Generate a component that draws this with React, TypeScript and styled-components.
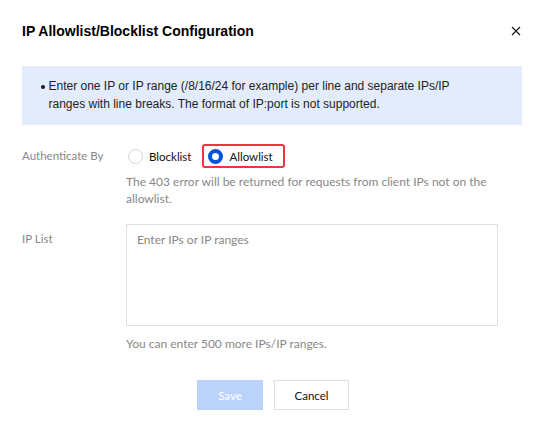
import React, { useState } from "react";
import styled, { createGlobalStyle } from "styled-components";

const GlobalStyle = createGlobalStyle`
  html, body {
    margin: 0;
    padding: 0;
    background: #ffffff;
  }
  * {
    box-sizing: border-box;
  }
`;

const Dialog = styled.div`
  width: 546px;
  height: 430px;
  background: #ffffff;
  padding: 21px 24px 0 22px;
  font-family: "Lato", "Liberation Sans", sans-serif;
  color: #000000;
`;

const Header = styled.div`
  display: flex;
  align-items: center;
  justify-content: space-between;
  height: 20px;
`;

const Title = styled.div`
  font-family: "Liberation Sans", Arial, sans-serif;
  font-size: 14px;
  font-weight: bold;
  color: #000000;
`;

const CloseButton = styled.button`
  background: none;
  border: none;
  padding: 0;
  width: 12px;
  height: 12px;
  display: flex;
  align-items: center;
  justify-content: center;
  cursor: pointer;
  color: #222;
`;

const Notice = styled.div`
  margin-top: 25px;
  background: #e3ecfd;
  padding: 11px 54px 12px 19px;
  font-family: "Liberation Sans", Arial, sans-serif;
  font-size: 12px;
  line-height: 18px;
  color: #222;
`;

const NoticeItem = styled.div`
  display: flex;
  gap: 4px;
`;

const Bullet = styled.span`
  flex-shrink: 0;
  width: 3.5px;
  height: 3.5px;
  border-radius: 50%;
  background: #222;
  margin-top: 8px;
`;

const Form = styled.div`
  margin-top: 19px;
  display: flex;
  flex-direction: column;
  gap: 17px;
`;

const FormRow = styled.div`
  display: grid;
  grid-template-columns: 104px 372px;
`;

const Label = styled.div<{ $offset?: number }>`
  font-size: 11.5px;
  color: #888888;
  line-height: 24px;
  padding-top: ${(p) => p.$offset ?? 0}px;
`;

const Field = styled.div`
  display: flex;
  flex-direction: column;
`;

const RadioGroup = styled.div`
  display: flex;
  align-items: center;
  gap: 9px;
  height: 24px;
`;

const RadioOption = styled.label<{ $highlight?: boolean }>`
  display: flex;
  align-items: center;
  gap: 6px;
  font-size: 11.5px;
  color: #111;
  height: 24px;
  padding: 0 ${(p) => (p.$highlight ? 10 : 0)}px 0 ${(p) => (p.$highlight ? 4 : 0)}px;
  border: 2px solid ${(p) => (p.$highlight ? "#ee3440" : "transparent")};
  border-radius: 3px;
  cursor: pointer;
`;

const RadioCircle = styled.span<{ $checked: boolean }>`
  width: 15px;
  height: 15px;
  border-radius: 50%;
  border: ${(p) => (p.$checked ? "4px solid #0052d9" : "1px solid #cfd5de")};
  background: #fff;
  flex-shrink: 0;
`;

const HelpText = styled.div`
  font-size: 12px;
  line-height: 17px;
  color: #888888;
  margin-top: 5px;
`;

const TextArea = styled.textarea`
  width: 372px;
  height: 102px;
  border: 1px solid #dcdfe6;
  border-radius: 0;
  padding: 6px 10px;
  font-family: "Lato", "Liberation Sans", sans-serif;
  font-size: 12px;
  line-height: 17px;
  resize: none;
  outline: none;
  color: #000;

  &::placeholder {
    color: #888888;
  }
`;

const TipText = styled.div`
  font-size: 12px;
  color: #888888;
  margin-top: 9px;
  line-height: 17px;
`;

const Footer = styled.div`
  margin-top: 28px;
  display: flex;
  justify-content: center;
  gap: 11px;
  margin-left: -22px;
  margin-right: -24px;
`;

const Button = styled.button<{ $primary?: boolean }>`
  height: 30px;
  width: ${(p) => (p.$primary ? 66 : 75)}px;
  padding: 0;
  font-family: "Lato", "Liberation Sans", sans-serif;
  font-size: 11.5px;
  border: 1px solid ${(p) => (p.$primary ? "#bbd3fb" : "#dcdfe6")};
  background: ${(p) => (p.$primary ? "#bbd3fb" : "#ffffff")};
  color: ${(p) => (p.$primary ? "#ffffff" : "#111")};
  cursor: ${(p) => (p.$primary ? "not-allowed" : "pointer")};
`;

const App = () => {
  const [mode, setMode] = useState<"block" | "allow">("allow");
  const [ips, setIps] = useState("");

  return (
    <>
      <GlobalStyle />
      <Dialog>
        <Header>
          <Title>IP Allowlist/Blocklist Configuration</Title>
          <CloseButton title="Close">
            <svg width="10" height="10" viewBox="0 0 10 10">
              <path d="M1 1 L9 9 M9 1 L1 9" stroke="#222" strokeWidth="1.3" />
            </svg>
          </CloseButton>
        </Header>

        <Notice>
          <NoticeItem>
            <Bullet />
            <span>
              Enter one IP or IP range (/8/16/24 for example) per line and separate IPs/IP
              ranges with line breaks. The format of IP:port is not supported.
            </span>
          </NoticeItem>
        </Notice>

        <Form>
          <FormRow>
            <Label>Authenticate By</Label>
            <Field>
              <RadioGroup>
                <RadioOption onClick={() => setMode("block")}>
                  <RadioCircle $checked={mode === "block"} />
                  Blocklist
                </RadioOption>
                <RadioOption $highlight onClick={() => setMode("allow")}>
                  <RadioCircle $checked={mode === "allow"} />
                  Allowlist
                </RadioOption>
              </RadioGroup>
              <HelpText>
                The 403 error will be returned for requests from client IPs not on the
                allowlist.
              </HelpText>
            </Field>
          </FormRow>

          <FormRow>
            <Label $offset={3}>IP List</Label>
            <Field>
              <TextArea
                placeholder="Enter IPs or IP ranges"
                value={ips}
                onChange={(e) => setIps(e.target.value)}
              />
              <TipText>You can enter 500 more IPs/IP ranges.</TipText>
            </Field>
          </FormRow>
        </Form>

        <Footer>
          <Button $primary disabled>
            Save
          </Button>
          <Button>Cancel</Button>
        </Footer>
      </Dialog>
    </>
  );
};

export default App;
